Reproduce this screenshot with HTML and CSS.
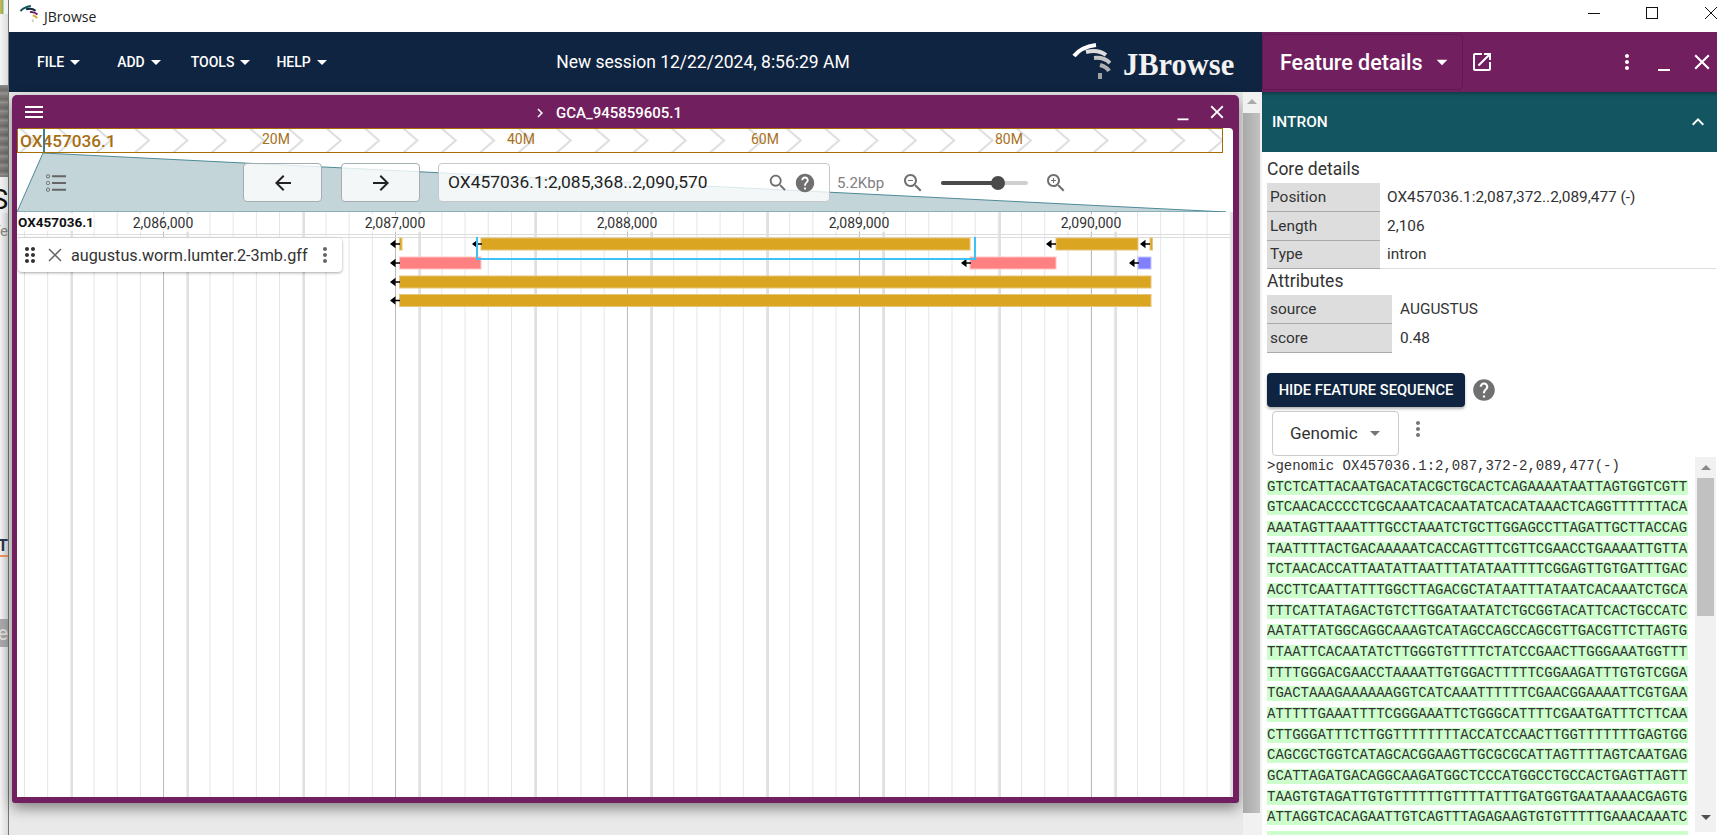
FILE: index.html
```html
<!DOCTYPE html>
<html lang="en">
<head>
    <meta charset="UTF-8">
    <title>JBrowse</title>
    <link rel="stylesheet" href="styles.css">
</head>
<body>
<svg class="defs" width="0" height="0">
    <symbol id="i-menu" viewBox="0 0 24 24"><path d="M3 18h18v-2H3v2zm0-5h18v-2H3v2zm0-7v2h18V6H3z"/></symbol>
    <symbol id="i-close" viewBox="0 0 24 24"><path d="M19 6.41 17.59 5 12 10.59 6.41 5 5 6.41 10.59 12 5 17.59 6.41 19 12 13.41 17.59 19 19 17.59 13.41 12z"/></symbol>
    <symbol id="i-min" viewBox="0 0 24 24"><path d="M6 19h12v2H6z"/></symbol>
    <symbol id="i-drop" viewBox="0 0 24 24"><path d="M7 10l5 5 5-5z"/></symbol>
    <symbol id="i-kebab" viewBox="0 0 24 24"><path d="M12 8c1.1 0 2-.9 2-2s-.9-2-2-2-2 .9-2 2 .9 2 2 2zm0 2c-1.1 0-2 .9-2 2s.9 2 2 2 2-.9 2-2-.9-2-2-2zm0 6c-1.1 0-2 .9-2 2s.9 2 2 2 2-.9 2-2-.9-2-2-2z"/></symbol>
    <symbol id="i-help" viewBox="0 0 24 24"><path d="M12 2C6.48 2 2 6.48 2 12s4.48 10 10 10 10-4.48 10-10S17.52 2 12 2zm1 17h-2v-2h2v2zm2.07-7.75-.9.92C13.45 12.9 13 13.5 13 15h-2v-.5c0-1.1.45-2.1 1.17-2.83l1.24-1.26c.37-.36.59-.86.59-1.41 0-1.1-.9-2-2-2s-2 .9-2 2H8c0-2.21 1.79-4 4-4s4 1.79 4 4c0 .88-.36 1.68-.93 2.25z"/></symbol>
    <symbol id="i-search" viewBox="0 0 24 24"><path d="M15.5 14h-.79l-.28-.27C15.41 12.59 16 11.11 16 9.5 16 5.91 13.09 3 9.5 3S3 5.91 3 9.5 5.91 16 9.5 16c1.61 0 3.09-.59 4.23-1.57l.27.28v.79l5 4.99L20.49 19l-4.99-5zm-6 0C7.01 14 5 11.99 5 9.5S7.01 5 9.5 5 14 7.01 14 9.5 11.99 14 9.5 14z"/></symbol>
</svg>

<div class="page">
    <!-- sliver of the window behind -->
    <div class="behind">
        <div class="behind-icon"></div>
        <div class="behind-photo"></div>
        <div class="behind-s">S</div>
        <div class="behind-te">Te</div>
        <div class="behind-yt">YT</div>
        <div class="behind-de">De</div>
    </div>

    <div class="app">
        <div class="titlebar">
            <svg class="title-logo" viewBox="0 0 40 38">
                <path d="M3 13Q10 4 25 2" stroke="#135560"/>
                <path d="M15 9Q27 6 35 12" stroke="#0f2440"/>
                <path d="M23 15Q33 14 39 20" stroke="#711f5e"/>
                <path d="M29 22Q36 24 38 28" stroke="#daa520"/>
                <path d="M29 30L29 36" stroke="#ccc"/>
            </svg>
            <span class="title-name">JBrowse</span>
            <div class="win-btns">
                <span class="win-min"></span>
                <span class="win-max"></span>
                <svg class="win-close" viewBox="0 0 12 12"><path d="M0 0L12 12M12 0L0 12"/></svg>
            </div>
        </div>

        <div class="app-body">
            <div class="left">
                <div class="topbar">
                    <div class="menus">
                        <span class="menu menu-file">File<svg class="icon"><use href="#i-drop"/></svg></span>
                        <span class="menu menu-add">Add<svg class="icon"><use href="#i-drop"/></svg></span>
                        <span class="menu menu-tools">Tools<svg class="icon"><use href="#i-drop"/></svg></span>
                        <span class="menu">Help<svg class="icon"><use href="#i-drop"/></svg></span>
                    </div>
                    <div class="session">New session 12/22/2024, 8:56:29 AM</div>
                    <div class="brand">
                        <svg class="brand-logo" viewBox="0 0 40 38">
                            <path d="M3 13Q10 4 25 2" stroke="#fff"/>
                            <path d="M15 9Q27 6 35 12" stroke="#ddd"/>
                            <path d="M23 15Q33 14 39 20" stroke="#c4c4c4"/>
                            <path d="M29 22Q36 24 38 28" stroke="#b0b0b0"/>
                            <path d="M29 30L29 36" stroke="#a0a0a0"/>
                        </svg>
                        <span class="brand-name">JBrowse</span>
                    </div>
                </div>

                <div class="workspace">
                    <div class="window">
                        <div class="window-head">
                            <svg class="icon head-menu"><use href="#i-menu"/></svg>
                            <div class="window-title">
                                <svg class="title-chev" viewBox="0 0 24 24"><path d="M10 6 8.59 7.41 13.17 12l-4.58 4.59L10 18l6-6z"/></svg>
                                GCA_945859605.1
                            </div>
                            <div class="head-btns">
                                <svg class="icon"><use href="#i-min"/></svg>
                                <svg class="icon"><use href="#i-close"/></svg>
                            </div>
                        </div>

                        <div class="view">
                            <div class="overview">
                                <svg class="chevrons">
                                    <defs>
                                        <pattern id="chev" width="38.34" height="23" patternUnits="userSpaceOnUse" patternTransform="translate(.5 0)">
                                            <path d="M1 -1L15.5 11.5L1 24" fill="none" stroke="#ddd" stroke-width="2"/>
                                        </pattern>
                                    </defs>
                                    <rect width="100%" height="100%" fill="url(#chev)"/>
                                </svg>
                                <span class="ov-name">OX457036.1</span>
                                <span class="ov-tick" style="left:244px">20M</span>
                                <span class="ov-tick" style="left:489px">40M</span>
                                <span class="ov-tick" style="left:733px">60M</span>
                                <span class="ov-tick" style="left:977px">80M</span>
                                <span class="ov-mark"></span>
                            </div>

                            <div class="controls">
                                <svg class="wedge" viewBox="0 0 1218 59">
                                    <path d="M26 0L1209 59L0 59Z"/>
                                </svg>
                                <svg class="track-sel" viewBox="0 0 20 18">
                                    <rect x=".5" y=".8" width="3" height="3" rx="1"/>
                                    <rect x=".5" y="7.5" width="3" height="3" rx="1"/>
                                    <rect x=".5" y="14.2" width="3" height="3" rx="1"/>
                                    <path d="M6 2.3H20M6 9H20M6 15.7H20"/>
                                </svg>
                                <div class="nav-btn">
                                    <svg class="icon" viewBox="0 0 24 24"><path d="M20 11H7.83l5.59-5.59L12 4l-8 8 8 8 1.41-1.41L7.83 13H20v-2z"/></svg>
                                </div>
                                <div class="nav-btn">
                                    <svg class="icon" viewBox="0 0 24 24"><path d="M12 4l-1.41 1.41L16.17 11H4v2h12.17l-5.58 5.59L12 20l8-8z"/></svg>
                                </div>
                                <div class="locbox">
                                    <span class="loc-text">OX457036.1:2,085,368..2,090,570</span>
                                    <svg class="icon loc-search"><use href="#i-search"/></svg>
                                    <svg class="icon loc-help"><use href="#i-help"/></svg>
                                </div>
                                <span class="kbp">5.2Kbp</span>
                                <svg class="zoom-ico" viewBox="0 0 24 24"><path d="M15.5 14h-.79l-.28-.27C15.41 12.59 16 11.11 16 9.5 16 5.91 13.09 3 9.5 3S3 5.91 3 9.5 5.91 16 9.5 16c1.61 0 3.09-.59 4.23-1.57l.27.28v.79l5 4.99L20.49 19l-4.99-5zm-6 0C7.01 14 5 11.99 5 9.5S7.01 5 9.5 5 14 7.01 14 9.5 11.99 14 9.5 14zM7 9h5v1H7z"/></svg>
                                <div class="slider"><span class="slider-fill"></span><span class="slider-thumb"></span></div>
                                <svg class="zoom-ico" viewBox="0 0 24 24"><path d="M15.5 14h-.79l-.28-.27C15.41 12.59 16 11.11 16 9.5 16 5.91 13.09 3 9.5 3S3 5.91 3 9.5 5.91 16 9.5 16c1.61 0 3.09-.59 4.23-1.57l.27.28v.79l5 4.99L20.49 19l-4.99-5zm-6 0C7.01 14 5 11.99 5 9.5S7.01 5 9.5 5 14 7.01 14 9.5 11.99 14 9.5 14zM12 10h-2v2H9v-2H7V9h2V7h1v2h2v1z"/></svg>
                            </div>

                            <div class="grid">
                                <div class="scale">
                                    <span class="scale-name">OX457036.1</span>
                                    <span class="scale-tick" style="left:146px">2,086,000</span>
                                    <span class="scale-tick" style="left:378px">2,087,000</span>
                                    <span class="scale-tick" style="left:610px">2,088,000</span>
                                    <span class="scale-tick" style="left:842px">2,089,000</span>
                                    <span class="scale-tick" style="left:1074px">2,090,000</span>
                                </div>
                                <div class="scale-gap"></div>

                                <svg class="features" viewBox="0 0 1216 100">
                                    <defs>
                                        <symbol id="arrow" viewBox="0 0 10 10"><path d="M0 5L5.500 .8V4.200H10V5.800H5.500V9.200Z"/></symbol>
                                    </defs>
                                    <g class="gold">
                                        <rect x="382.500" y="26" width="2.500" height="12"/>
                                        <rect x="464" y="26" width="489" height="12"/>
                                        <rect x="1039" y="26" width="82" height="12"/>
                                        <rect x="1133" y="26" width="2.500" height="12"/>
                                        <rect x="382.500" y="64" width="751.500" height="12"/>
                                        <rect x="382.500" y="82.500" width="751.500" height="12"/>
                                    </g>
                                    <g class="pink">
                                        <rect x="382.500" y="45" width="81.500" height="12"/>
                                        <rect x="953" y="45" width="86" height="12"/>
                                    </g>
                                    <rect class="blue" x="1121" y="45" width="13" height="12"/>
                                    <use href="#arrow" x="373" y="27" width="10" height="10"/>
                                    <use href="#arrow" x="455" y="27" width="10" height="10"/>
                                    <use href="#arrow" x="1029" y="27" width="10" height="10"/>
                                    <use href="#arrow" x="1123" y="27" width="10" height="10"/>
                                    <use href="#arrow" x="373" y="46" width="10" height="10"/>
                                    <use href="#arrow" x="944" y="46" width="10" height="10"/>
                                    <use href="#arrow" x="1112" y="46" width="10" height="10"/>
                                    <use href="#arrow" x="373" y="65" width="10" height="10"/>
                                    <use href="#arrow" x="373" y="83.500" width="10" height="10"/>
                                    <path class="pick" d="M460 25V47H958V25"/>
                                </svg>

                                <div class="track-label">
                                    <svg class="icon drag" viewBox="0 0 24 24"><path d="M11 18c0 1.100-.9 2-2 2s-2-.9-2-2 .9-2 2-2 2 .9 2 2zm-2-8c-1.100 0-2 .9-2 2s.9 2 2 2 2-.9 2-2-.9-2-2-2zm0-6c-1.100 0-2 .9-2 2s.9 2 2 2 2-.9 2-2-.9-2-2-2zm6 4c1.100 0 2-.9 2-2s-.9-2-2-2-2 .9-2 2 .9 2 2 2zm0 2c-1.100 0-2 .9-2 2s.9 2 2 2 2-.9 2-2-.9-2-2-2zm0 6c-1.100 0-2 .9-2 2s.9 2 2 2 2-.9 2-2-.9-2-2-2z"/></svg>
                                    <svg class="lab-close" viewBox="0 0 14 14"><path d="M1 1L13 13M13 1L1 13"/></svg>
                                    <span class="lab-name">augustus.worm.lumter.2-3mb.gff</span>
                                    <svg class="icon lab-kebab"><use href="#i-kebab"/></svg>
                                </div>
                            </div>
                        </div>
                    </div>

                    <div class="scrollbar">
                        <span class="sb-up"></span>
                        <span class="sb-thumb"></span>
                    </div>
                </div>
            </div>

            <div class="panel">
                <div class="panel-head">
                    <div class="panel-select">Feature details<svg class="icon"><use href="#i-drop"/></svg></div>
                    <svg class="icon open-new" viewBox="0 0 24 24"><path d="M19 19H5V5h7V3H5c-1.110 0-2 .9-2 2v14c0 1.100.89 2 2 2h14c1.100 0 2-.9 2-2v-7h-2v7zM14 3v2h3.590l-9.830 9.830 1.410 1.410L19 6.410V10h2V3h-7z"/></svg>
                    <svg class="icon ph-kebab"><use href="#i-kebab"/></svg>
                    <svg class="icon ph-min"><use href="#i-min"/></svg>
                    <svg class="icon ph-close"><use href="#i-close"/></svg>
                </div>

                <div class="accordion">
                    <span>INTRON</span>
                    <svg class="icon" viewBox="0 0 24 24"><path d="M12 8l-6 6 1.410 1.410L12 10.830l4.590 4.580L18 14z"/></svg>
                </div>

                <div class="details">
                    <div class="sec-title">Core details</div>
                    <table class="attrs core">
                        <tr><th>Position</th><td>OX457036.1:2,087,372..2,089,477 (-)</td></tr>
                        <tr><th>Length</th><td>2,106</td></tr>
                        <tr><th>Type</th><td>intron</td></tr>
                    </table>
                    <div class="sec-title sec-attr">Attributes</div>
                    <table class="attrs extra">
                        <tr><th>source</th><td>AUGUSTUS</td></tr>
                        <tr><th>score</th><td>0.48</td></tr>
                    </table>

                    <div class="seq-actions">
                        <button class="seq-btn">Hide feature sequence</button>
                        <svg class="icon seq-help"><use href="#i-help"/></svg>
                    </div>
                    <div class="seq-select-row">
                        <div class="seq-select">Genomic<svg class="icon"><use href="#i-drop"/></svg></div>
                        <svg class="icon seq-kebab"><use href="#i-kebab"/></svg>
                    </div>
                    <div class="seq-box">
                        <div class="seq-text">
                            <div class="seq-title">&gt;genomic OX457036.1:2,087,372-2,089,477(-)</div>
                            <div class="seq-row">GTCTCATTACAATGACATACGCTGCACTCAGAAAATAATTAGTGGTCGTT</div>
                            <div class="seq-row">GTCAACACCCCTCGCAAATCACAATATCACATAAACTCAGGTTTTTTACA</div>
                            <div class="seq-row">AAATAGTTAAATTTGCCTAAATCTGCTTGGAGCCTTAGATTGCTTACCAG</div>
                            <div class="seq-row">TAATTTTACTGACAAAAATCACCAGTTTCGTTCGAACCTGAAAATTGTTA</div>
                            <div class="seq-row">TCTAACACCATTAATATTAATTTATATAATTTTCGGAGTTGTGATTTGAC</div>
                            <div class="seq-row">ACCTTCAATTATTTGGCTTAGACGCTATAATTTATAATCACAAATCTGCA</div>
                            <div class="seq-row">TTTCATTATAGACTGTCTTGGATAATATCTGCGGTACATTCACTGCCATC</div>
                            <div class="seq-row">AATATTATGGCAGGCAAAGTCATAGCCAGCCAGCGTTGACGTTCTTAGTG</div>
                            <div class="seq-row">TTAATTCACAATATCTTGGGTGTTTTCTATCCGAACTTGGGAAATGGTTT</div>
                            <div class="seq-row">TTTTGGGACGAACCTAAAATTGTGGACTTTTTCGGAAGATTTGTGTCGGA</div>
                            <div class="seq-row">TGACTAAAGAAAAAAGGTCATCAAATTTTTTCGAACGGAAAATTCGTGAA</div>
                            <div class="seq-row">ATTTTTGAAATTTTCGGGAAATTCTGGGCATTTTCGAATGATTTCTTCAA</div>
                            <div class="seq-row">CTTGGGATTTCTTGGTTTTTTTTACCATCCAACTTGGTTTTTTTGAGTGG</div>
                            <div class="seq-row">CAGCGCTGGTCATAGCACGGAAGTTGCGCGCATTAGTTTTAGTCAATGAG</div>
                            <div class="seq-row">GCATTAGATGACAGGCAAGATGGCTCCCATGGCCTGCCACTGAGTTAGTT</div>
                            <div class="seq-row">TAAGTGTAGATTGTGTTTTTTGTTTTATTTGATGGTGAATAAAACGAGTG</div>
                            <div class="seq-row">ATTAGGTCACAGAATTGTCAGTTTAGAGAAGTGTGTTTTTGAAACAAATC</div>
                            <div class="seq-row"></div>
                        </div>
                        <div class="seq-scroll">
                            <span class="ss-up"></span>
                            <span class="ss-thumb"></span>
                            <span class="ss-down"></span>
                        </div>
                    </div>
                </div>
            </div>
        </div>
    </div>
</div>
</body>
</html>
```

FILE: styles.css
```css
*{
    box-sizing: border-box;
    margin: 0;
    padding: 0;
}
body{
    width: 1717px;
    height: 835px;
    overflow: hidden;
    font-family: Roboto, "Liberation Sans", sans-serif;
    font-size: 14px;
    color: #2a2a2a;
    background-color: #fff;
}
.defs{
    display: block;
    height: 0;
}
.icon{
    display: block;
    width: 24px;
    height: 24px;
    fill: currentColor;
    flex: none;
}
.page{
    display: flex;
    height: 835px;
}

/* window behind, only a few px of it show */
.behind{
    width: 9px;
    flex: none;
    display: flex;
    flex-direction: column;
    align-items: flex-end;
    overflow: hidden;
    border-right: 1px solid #777;
    background: linear-gradient(90deg, #f5f5f5, #dcdcdc);
}
.behind > div{
    width: 8px;
    flex: none;
    display: flex;
    justify-content: flex-end;
    overflow: hidden;
    white-space: nowrap;
}
.behind-icon{
    height: 14px;
    background: linear-gradient(90deg, #e2b24a 0, #7cb46b 3px, #f1f1f1 4px);
    margin-bottom: 71px;
}
.behind-photo{
    height: 92px;
    background: repeating-linear-gradient(180deg, #8c8a86 0, #6f6d6a 5px, #9b9996 9px);
}
.behind-s{
    height: 36px;
    padding-top: 9px;
    background-color: #f4f4f4;
    font-size: 28px;
    line-height: 27px;
    color: #111;
}
.behind-te{
    height: 20px;
    margin-top: 8px;
    font-size: 15px;
    line-height: 20px;
    color: #888;
}
.behind-yt{
    height: 21px;
    margin-top: 295px;
    border-bottom: 2px solid #ee9560;
    font-size: 16px;
    line-height: 19px;
    font-weight: 700;
    color: #27384e;
}
.behind-de{
    height: 28px;
    margin-top: 62px;
    background-color: #a9a9a9;
    font-size: 20px;
    line-height: 28px;
    color: #e3e3e3;
}

.app{
    flex: 1;
    min-width: 0;
    display: flex;
    flex-direction: column;
}
.titlebar{
    height: 32px;
    flex: none;
    display: flex;
    align-items: center;
    padding-left: 10px;
    background-color: #fff;
}
.title-logo{
    width: 19px;
    height: 18px;
    margin-top: -4px;
    fill: none;
    stroke-width: 4;
    stroke-linecap: butt;
}
.title-name{
    margin-left: 6px;
    font-family: "Open Sans", sans-serif;
    font-size: 14px;
    color: #222;
}
.win-btns{
    margin-left: auto;
    display: flex;
    align-items: center;
    height: 26px;
    margin-top: -6px;
}
.win-min{
    width: 12px;
    height: 1px;
    background-color: #111;
    margin-right: 46px;
}
.win-max{
    width: 12px;
    height: 12px;
    border: 1px solid #111;
    margin-right: 47px;
}
.win-close{
    width: 12px;
    height: 12px;
    fill: none;
    stroke: #111;
}

.app-body{
    flex: 1;
    min-height: 0;
    display: flex;
}
.left{
    width: 1253px;
    flex: none;
    display: flex;
    flex-direction: column;
}
.topbar{
    height: 60px;
    flex: none;
    display: flex;
    align-items: center;
    padding-left: 28px;
    background-color: #0f2440;
    color: #fff;
}
.menus{
    display: flex;
    align-items: center;
    width: 295px;
    flex: none;
}
.menu{
    display: flex;
    align-items: center;
    text-transform: uppercase;
    font-size: 14px;
    font-weight: 500;
}
.menu .icon{
    margin: 0 -2px 0 -1px;
}
.menu-file{ margin-right: 32px; }
.menu-add{ margin-right: 25px; }
.menu-tools{ margin-right: 21px; }
.session{
    flex: 1;
    text-align: center;
    font-size: 17.5px;
    padding-left: 3px;
}
.brand{
    display: flex;
    align-items: center;
    width: 191px;
    flex: none;
}
.brand-logo{
    width: 40px;
    height: 38px;
    fill: none;
    stroke-width: 4;
}
.brand-name{
    margin-left: 12px;
    margin-top: 6px;
    font-family: "Liberation Serif", serif;
    font-weight: 700;
    font-size: 30.5px;
    line-height: 30px;
    color: #f2f2f2;
}

.workspace{
    flex: 1;
    min-height: 0;
    display: flex;
    background-color: #e9e9e9;
}
.window{
    width: 1227px;
    height: 708px;
    margin: 3px 4px 0 3px;
    flex: none;
    display: flex;
    flex-direction: column;
    padding: 0 6px 6px 5px;
    border-radius: 5px 5px 3px 3px;
    background-color: #711f5e;
    box-shadow: 0 5px 14px rgba(0, 0, 0, .45);
}
.window-head{
    height: 33px;
    flex: none;
    display: flex;
    align-items: center;
    justify-content: space-between;
    color: #fff;
}
.head-menu{
    margin-left: 5px;
}
.window-title{
    display: flex;
    align-items: center;
    margin-left: -5px;
    margin-top: 2px;
    font-size: 15px;
    font-weight: 500;
}
.title-chev{
    width: 18px;
    height: 18px;
    margin-right: 7px;
    fill: #fff;
}
.head-btns{
    display: flex;
    gap: 12px;
    margin-right: 5px;
}
.head-btns .icon{
    width: 22px;
    height: 22px;
}
.view{
    flex: 1;
    min-height: 0;
    display: flex;
    flex-direction: column;
    border-radius: 4px 4px 0 0;
    background-color: #fff;
    overflow: hidden;
}
.overview{
    position: relative;
    width: 1206px;
    height: 25px;
    flex: none;
    border: 1px solid #a66e00;
    overflow: hidden;
}
.chevrons{
    position: absolute;
    left: 0;
    top: 0;
    width: 100%;
    height: 23px;
}
.ov-name{
    position: absolute;
    left: 2px;
    top: 2px;
    font-size: 17.2px;
    line-height: 21px;
    font-weight: 500;
    color: #a66e12;
}
.ov-tick{
    position: absolute;
    top: 2px;
    font-size: 14px;
    line-height: 17px;
    color: #a6701c;
}
.ov-mark{
    position: absolute;
    left: 25px;
    top: 0;
    width: 2px;
    height: 100%;
    background-color: #3f7d8a;
}
.controls{
    position: relative;
    height: 59px;
    flex: none;
    display: flex;
    align-items: center;
    padding-left: 29px;
}
.wedge{
    position: absolute;
    left: 0;
    top: 0;
    width: 1218px;
    height: 59px;
    fill: #c4d5d9;
    stroke: #4d8a96;
    stroke-width: 1;
}
.track-sel{
    position: relative;
    width: 20px;
    height: 18px;
    margin-right: 177px;
    fill: none;
    stroke: #666;
}
.track-sel path{
    stroke-width: 2;
}
.nav-btn{
    position: relative;
    width: 79px;
    height: 39px;
    margin-right: 19px;
    display: flex;
    align-items: center;
    justify-content: center;
    border: 1px solid #a4adb0;
    border-radius: 4px;
    background-color: rgba(255, 255, 255, .8);
    color: #222;
}
.nav-btn + .nav-btn{
    margin-right: 18px;
}
.locbox{
    position: relative;
    width: 392px;
    height: 39px;
    display: flex;
    align-items: center;
    padding-left: 9px;
    border: 1px solid #c4c8ca;
    border-radius: 4px;
    background-color: rgba(255, 255, 255, .8);
    font-size: 17.4px;
    color: #222;
}
.loc-text{
    margin-top: -2px;
}
.loc-search{
    margin-left: 59px;
    width: 22px;
    height: 22px;
    color: #707070;
}
.loc-help{
    margin-left: 5px;
    width: 22px;
    height: 22px;
    color: #707070;
}
.kbp{
    position: relative;
    margin-left: 7px;
    width: 48px;
    font-size: 15px;
    color: #808080;
}
.zoom-ico{
    position: relative;
    width: 24px;
    height: 24px;
    margin-left: 16px;
    fill: #707070;
}
.slider{
    position: relative;
    width: 87px;
    height: 4px;
    margin-left: 16px;
    margin-right: 0;
    border-radius: 2px;
    background-color: #cfcfcf;
}
.slider-fill{
    position: absolute;
    left: 0;
    top: 0;
    width: 56px;
    height: 4px;
    border-radius: 2px;
    background-color: #4a4a4a;
}
.slider-thumb{
    position: absolute;
    left: 50px;
    top: -5px;
    width: 14px;
    height: 14px;
    border-radius: 50%;
    background-color: #4a4a4a;
}
.grid{
    position: relative;
    flex: 1;
    min-height: 0;
    background-image:
        linear-gradient(90deg, #bbb 1px, transparent 1px),
        linear-gradient(90deg, #e0e0e0 2px, transparent 2px),
        linear-gradient(90deg, #e4e4e4 1px, transparent 1px);
    background-size: 232px 100%, 116px 100%, 23.2px 100%;
    background-position: 146px 0, 54px 0, 7px 0;
    overflow: hidden;
}
.scale{
    position: relative;
    height: 23px;
    border-bottom: 1px solid #ddd;
    font-size: 14px;
}
.scale-gap{
    height: 3px;
    border-bottom: 1px solid #ddd;
}
.scale-name{
    position: absolute;
    left: 1px;
    top: 1px;
    font-size: 13.5px;
    line-height: 18px;
    font-weight: 700;
    color: #111;
    background-color: rgba(255, 255, 255, .8);
}
.scale-tick{
    position: absolute;
    top: 2px;
    line-height: 18px;
    transform: translateX(-50%);
    color: #333;
    background-color: rgba(255, 255, 255, .7);
}
.features{
    position: absolute;
    left: 0;
    top: 0;
    width: 1216px;
    height: 100px;
}
.gold{
    fill: #daa520;
    stroke: #e6c478;
    stroke-width: 1;
}
.pink{
    fill: #ff8080;
    stroke: #ffc4c4;
    stroke-width: 1;
}
.blue{
    fill: #8080ff;
    stroke: #c4c4ff;
    stroke-width: 1;
}
.pick{
    fill: none;
    stroke: #3cc2f5;
    stroke-width: 2;
}
.track-label{
    position: absolute;
    left: 1px;
    top: 26px;
    width: 324px;
    height: 34px;
    display: flex;
    align-items: center;
    border-radius: 4px;
    background-color: #fff;
    box-shadow: 0 1px 3px rgba(0, 0, 0, .35);
    color: #333;
}
.lab-close{
    width: 14px;
    height: 14px;
    margin-left: 6px;
    fill: none;
    stroke: #666;
    stroke-width: 1.5;
    flex: none;
}
.lab-name{
    margin-left: 9px;
    font-size: 16.2px;
    white-space: nowrap;
}
.lab-kebab{
    margin-left: 5px;
    color: #666;
}
.scrollbar{
    position: relative;
    width: 19px;
    flex: none;
    display: flex;
    flex-direction: column;
    align-items: flex-start;
    background-color: #f1f1f1;
}
.sb-up{
    width: 0;
    height: 0;
    margin: 7px 0 0 4px;
    border: 5px solid transparent;
    border-top: 0;
    border-bottom-color: #aaa;
}
.sb-thumb{
    width: 17px;
    height: 700px;
    margin-top: 9px;
    background: linear-gradient(90deg, #a9a9a9, #c2c2c2);
}

.panel{
    flex: 1;
    min-width: 0;
    display: flex;
    flex-direction: column;
    overflow: hidden;
    background-color: #fff;
}
.panel-head{
    height: 60px;
    flex: none;
    display: flex;
    align-items: center;
    background-color: #711f5e;
    color: #fff;
}
.panel-select{
    display: flex;
    align-items: center;
    width: 201px;
    height: 56px;
    padding-left: 17px;
    border: 1px solid #5f1a4f;
    border-radius: 4px;
    font-size: 21.5px;
    font-weight: 500;
}
.panel-select .icon{
    margin-left: 6px;
    width: 26px;
    height: 26px;
}
.open-new{
    margin-left: 7px;
}
.ph-kebab{
    margin-left: 121px;
}
.ph-min{
    margin-left: 13px;
}
.ph-close{
    margin-left: 13px;
    width: 26px;
    height: 26px;
}
.accordion{
    height: 60px;
    flex: none;
    display: flex;
    align-items: center;
    justify-content: space-between;
    padding: 0 7px 0 10px;
    background-color: #135560;
    color: #fff;
    font-size: 15.4px;
    font-weight: 500;
    box-shadow: inset 0 4px 4px -3px rgba(0, 0, 0, .4);
}
.details{
    flex: 1;
    min-height: 0;
    padding: 4px 0 0 5px;
}
.sec-title{
    font-size: 17.5px;
    line-height: 27px;
    color: #333;
}
.sec-attr{
    margin-top: -1px;
}
.attrs{
    border-collapse: collapse;
    width: 449px;
    font-size: 15.4px;
    border-bottom: 1px solid #ddd;
}
.extra{
    border-bottom: 0;
}
.attrs th{
    height: 28.5px;
    padding-left: 3px;
    text-align: left;
    font-weight: 400;
    background-color: #ddd;
    border-bottom: 1px solid #aaa;
    color: #333;
}
.attrs td{
    padding-left: 7px;
    color: #333;
}
.core th{
    width: 113px;
}
.extra th{
    width: 125px;
}
.extra td{
    padding-left: 8px;
}
.seq-actions{
    display: flex;
    align-items: center;
    margin-top: 20px;
}
.seq-btn{
    width: 198px;
    height: 34px;
    border: 0;
    border-radius: 4px;
    background-color: #0f2440;
    color: #fff;
    font-family: inherit;
    font-size: 14.7px;
    font-weight: 500;
    text-transform: uppercase;
    box-shadow: 0 2px 3px rgba(0, 0, 0, .3);
}
.seq-help{
    margin-left: 6px;
    width: 26px;
    height: 26px;
    color: #707070;
}
.seq-select-row{
    display: flex;
    padding-left: 5px;
    margin-top: 4px;
}
.seq-select{
    display: flex;
    align-items: center;
    width: 127px;
    height: 45px;
    padding-left: 17px;
    border: 1px solid #ccc;
    border-radius: 4px;
    font-size: 17px;
    color: #333;
}
.seq-select .icon{
    margin-left: 5px;
    color: #757575;
}
.seq-kebab{
    margin: 6px 0 0 7px;
    color: #757575;
}
.seq-box{
    display: flex;
    justify-content: space-between;
    height: 380px;
    margin-top: 1px;
    overflow: hidden;
}
.seq-text{
    width: 421px;
    font-family: "Liberation Mono", monospace;
    font-size: 14px;
    color: #333;
}
.seq-title{
    height: 23.300px;
    line-height: 18px;
    white-space: pre;
}
.seq-row{
    height: 15px;
    margin-bottom: 5.670px;
    line-height: 15px;
    background-color: #ccffcc;
    white-space: pre;
}
.seq-scroll{
    position: relative;
    width: 21px;
    height: 375px;
    margin-right: 1px;
    display: flex;
    flex-direction: column;
    align-items: center;
    background-color: #f1f1f1;
}
.ss-up{
    width: 0;
    height: 0;
    margin-top: 8px;
    border: 5px solid transparent;
    border-top: 0;
    border-bottom-color: #8a8a8a;
}
.ss-thumb{
    width: 17px;
    height: 138px;
    margin-top: 8px;
    background-color: #c1c1c1;
}
.ss-down{
    width: 0;
    height: 0;
    margin-top: 199px;
    border: 5px solid transparent;
    border-bottom: 0;
    border-top-color: #505050;
}
```
